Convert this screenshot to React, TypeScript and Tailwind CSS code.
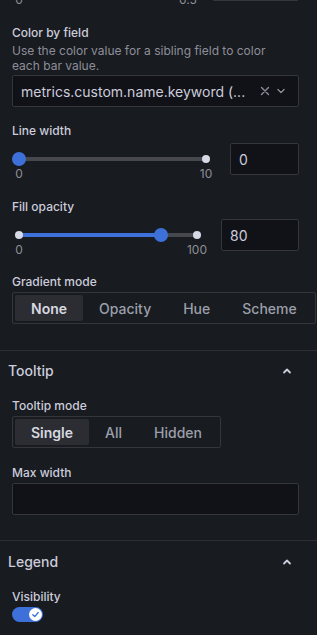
import React from "react";

const label = "text-[12px] leading-4 font-medium text-[#ccccdc]";

function SliderField({
  trackW,
  pct,
  value,
  maxLabel,
  className = "",
}: {
  trackW: number;
  pct: number;
  value: string;
  maxLabel: string;
  className?: string;
}) {
  const thumbX = (trackW * pct) / 100;
  return (
    <div className={"flex items-start h-[39px] " + className}>
      <div className="relative h-8 pl-[7px] shrink-0">
        <div className="relative h-8" style={{ width: trackW }}>
          <div className="absolute left-0 right-0 top-[14px] h-[4px] rounded-full bg-[#46484e]" />
          <div
            className="absolute left-0 top-[14px] h-[4px] rounded-full bg-[#3d71d9]"
            style={{ width: thumbX }}
          />
          <div className="absolute left-[-4px] top-[12px] w-2 h-2 rounded-full bg-[#d8d9e6]" />
          <div className="absolute right-[-4px] top-[12px] w-2 h-2 rounded-full bg-[#d8d9e6]" />
          <div
            className="absolute top-[9px] w-[14px] h-[14px] rounded-full bg-[#3d71d9]"
            style={{ left: thumbX - 7 }}
          />
          <div className="absolute left-[-10px] w-5 top-[23px] text-center text-[12px] leading-4 text-[#8e8e9a]">
            0
          </div>
          <div className="absolute right-[-15px] w-[30px] top-[23px] text-center text-[12px] leading-4 text-[#8e8e9a]">
            {maxLabel}
          </div>
        </div>
      </div>
      <div className="ml-6 flex-1 h-8 rounded-[2px] border border-[#34363c] bg-[#111217] px-2 flex items-center text-[14px] text-[#ccccdc]">
        {value}
      </div>
    </div>
  );
}

function Radio({ options, selected, className = "" }: { options: string[]; selected: string; className?: string }) {
  return (
    <div className={"flex w-max h-8 p-[2px] rounded-[2px] border border-[#34363c] " + className}>
      {options.map((o) =>
        o === selected ? (
          <div key={o} className="px-4 h-full flex items-center rounded-[2px] bg-[#2b2d33] text-[14px] font-semibold text-[#d8d9e0]">
            {o}
          </div>
        ) : (
          <div key={o} className="px-4 h-full flex items-center text-[14px] font-medium text-[#9b9fab]">
            {o}
          </div>
        )
      )}
    </div>
  );
}

function ChevronUp() {
  return (
    <svg width="10" height="8" viewBox="0 0 10 8" fill="none">
      <path d="M2 5.5 L5 2.5 L8 5.5" stroke="#ccccdc" strokeWidth="1.8" strokeLinecap="round" strokeLinejoin="round" />
    </svg>
  );
}

function Header({ title, pt }: { title: string; pt: string }) {
  return (
    <div className={"flex items-center justify-between pl-2 pr-[25px] pb-[17px] " + pt}>
      <div className="text-[14px] leading-5 font-medium text-[#ccccdc]">{title}</div>
      <ChevronUp />
    </div>
  );
}

export default function App() {
  return (
    <div
      className="w-[317px] h-[635px] overflow-hidden bg-[#181b1f]"
      style={{ fontFamily: "Inter, 'Noto Sans', sans-serif" }}
    >
      <div className="pl-3 pr-[18px]">
        <SliderField trackW={169} pct={100} value="0.5" maxLabel="0.5" className="-mt-[31px] mb-[17px]" />

        <div className={label}>Color by field</div>
        <div className="w-[276px] text-[12px] leading-[15px] text-[#8e8e9a] mt-[2px] mb-[2px]">
          Use the color value for a sibling field to color each bar value.
        </div>
        <div className="h-8 rounded-[2px] border border-[#34363c] bg-[#111217] pl-2 pr-3 flex items-center mb-[16px]">
          <div className="flex-1 text-[14px] text-[#ccccdc] whitespace-nowrap overflow-hidden">
            metrics.custom.name.keyword (...
          </div>
          <svg width="10" height="10" viewBox="0 0 10 10" className="ml-2">
            <path d="M1.5 1.5 L8.5 8.5 M8.5 1.5 L1.5 8.5" stroke="#8e8e9a" strokeWidth="1.4" strokeLinecap="round" />
          </svg>
          <svg width="10" height="8" viewBox="0 0 10 8" className="ml-[6px]">
            <path d="M2 2.5 L5 5.5 L8 2.5" stroke="#8e8e9a" strokeWidth="1.4" strokeLinecap="round" strokeLinejoin="round" />
          </svg>
        </div>

        <div className={label + " mb-1"}>Line width</div>
        <SliderField trackW={187} pct={0} value="0" maxLabel="10" className="mb-[17px]" />

        <div className={label + " mb-1"}>Fill opacity</div>
        <SliderField trackW={178} pct={80} value="80" maxLabel="100" className="mb-[16px]" />

        <div className={label + " mb-[2px]"}>Gradient mode</div>
        <Radio options={["None", "Opacity", "Hue", "Scheme"]} selected="None" className="mb-[26px]" />
      </div>

      <div className="h-px bg-[#2c2e33]" />
      <Header title="Tooltip" pt="pt-[10px]" />
      <div className="pl-3 pr-[18px]">
        <div className={label + " mb-[2px]"}>Tooltip mode</div>
        <Radio options={["Single", "All", "Hidden"]} selected="Single" className="mb-[17px]" />
        <div className={label + " mb-[2px]"}>Max width</div>
        <div className="h-8 rounded-[2px] border border-[#34363c] bg-[#111217] mb-[25px]" />
      </div>

      <div className="h-px bg-[#2c2e33]" />
      <Header title="Legend" pt="pt-[11px]" />
      <div className="pl-3 pr-[18px]">
        <div className={label + " mb-[2px]"}>Visibility</div>
        <div className="w-[31px] h-[15px] rounded-full bg-[#3d71d9] flex items-center justify-end pr-[1px]">
          <div className="w-[13px] h-[13px] rounded-full bg-white flex items-center justify-center">
            <svg width="9" height="9" viewBox="0 0 10 10">
              <path d="M2 5.2 L4.2 7.3 L8 2.8" stroke="#3d71d9" strokeWidth="1.5" fill="none" strokeLinecap="round" strokeLinejoin="round" />
            </svg>
          </div>
        </div>
      </div>
    </div>
  );
}
